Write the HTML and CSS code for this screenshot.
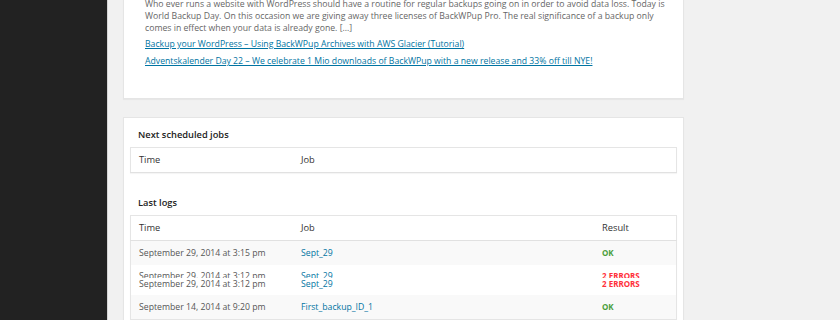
FILE: index.html
```html
<!DOCTYPE html>
<html lang="en">
<head>
    <meta charset="UTF-8">
    <title>BackWPup Dashboard</title>
    <link rel="stylesheet" href="styles.css">
</head>
<body>

<div class="admin-menu"></div>

<div class="wrap">
    <div class="postbox feed">
        <p>Who ever runs a website with WordPress should have a routine for regular backups going on in order to avoid data loss. Today is World Backup Day. On this occasion we are giving away three licenses of BackWPup Pro. The real significance of a backup only comes in effect when your data is already gone. […]</p>
        <a class="feed-link" href="#">Backup your WordPress – Using BackWPup Archives with AWS Glacier (Tutorial)</a>
        <a class="feed-link" href="#">Adventskalender Day 22 – We celebrate 1 Mio downloads of BackWPup with a new release and 33% off till NYE!</a>
    </div>

    <div class="postbox jobs">
        <h3>Next scheduled jobs</h3>
        <table class="widefat">
            <thead>
                <tr>
                    <th class="col-time">Time</th>
                    <th>Job</th>
                </tr>
            </thead>
        </table>

        <h3 class="logs-title">Last logs</h3>
        <table class="widefat striped">
            <thead>
                <tr>
                    <th class="col-time">Time</th>
                    <th class="col-job">Job</th>
                    <th>Result</th>
                </tr>
            </thead>
            <tbody>
                <tr>
                    <td>September 29, 2014 at 3:15 pm</td>
                    <td><a href="#">Sept_29</a></td>
                    <td><span class="ok">OK</span></td>
                </tr>
                <tr class="double">
                    <td>
                        <div><span>September 29, 2014 at 3:12 pm</span></div>
                        <div><span>September 29, 2014 at 3:12 pm</span></div>
                    </td>
                    <td>
                        <div><span><a href="#">Sept_29</a></span></div>
                        <div><span><a href="#">Sept_29</a></span></div>
                    </td>
                    <td>
                        <div><span class="err">2 ERRORS</span></div>
                        <div><span class="err">2 ERRORS</span></div>
                    </td>
                </tr>
                <tr>
                    <td>September 14, 2014 at 9:20 pm</td>
                    <td><a href="#">First_backup_ID_1</a></td>
                    <td><span class="ok">OK</span></td>
                </tr>
            </tbody>
        </table>
    </div>
</div>

</body>
</html>
```

FILE: styles.css
```css
body {
    margin: 0;
    height: 320px;
    overflow: hidden;
    display: flex;
    background-color: #f1f1f1;
    font-family: "Open Sans", Arial, sans-serif;
    font-size: 8.7px;
    line-height: 12px;
    color: #555;
}
.admin-menu {
    width: 107px;
    flex: none;
    background-color: #222;
    border-right: 1px solid #d4d4d4;
}
.wrap {
    width: 561px;
    padding-left: 15px;
}
.postbox {
    background: white;
    border: 1px solid #e5e5e5;
    box-shadow: 0 1px 1px rgba(0, 0, 0, 0.04);
}
.feed {
    border-top: none;
    padding: 0 14px 31px 21px;
}
.feed p {
    margin: -2px 0 0;
    color: #666;
}
.feed-link {
    display: block;
    margin-top: 4px;
    color: #0074a2;
}
.feed-link + .feed-link {
    margin-top: 5px;
}
.jobs {
    margin-top: 18px;
    padding: 11px 6px 0;
}
h3 {
    margin: 0;
    padding-left: 8px;
    font-size: 9.3px;
    line-height: 12px;
    font-weight: 600;
    color: #222;
}
.logs-title {
    margin-top: 24px;
}
table {
    width: 100%;
    border-collapse: collapse;
    margin-top: 6px;
}
.widefat {
    border: 1px solid #e5e5e5;
    box-shadow: 0 1px 1px rgba(0, 0, 0, 0.04);
}
.widefat th {
    text-align: left;
    font-weight: normal;
    font-size: 9.3px;
    color: #333;
    padding: 6px 8px;
    line-height: 12px;
    border-bottom: 1px solid #e1e1e1;
}
.widefat td {
    padding: 6px 8px;
    line-height: 12px;
    vertical-align: top;
}
.col-time {
    width: 146px;
}
.col-job {
    width: 285px;
}
.striped tbody tr:nth-child(odd) td {
    background-color: #f9f9f9;
}
a {
    color: #0074a2;
    text-decoration: none;
}
.feed a {
    text-decoration: underline;
}
.ok, .err {
    font-size: 8px;
    font-weight: bold;
}
.ok {
    color: #4a9e3b;
}
.err {
    color: #ff2f3a;
}
.double td {
    padding-top: 7px;
    padding-bottom: 7px;
    line-height: 8px;
}
.double span {
    background-color: white;
}
```
